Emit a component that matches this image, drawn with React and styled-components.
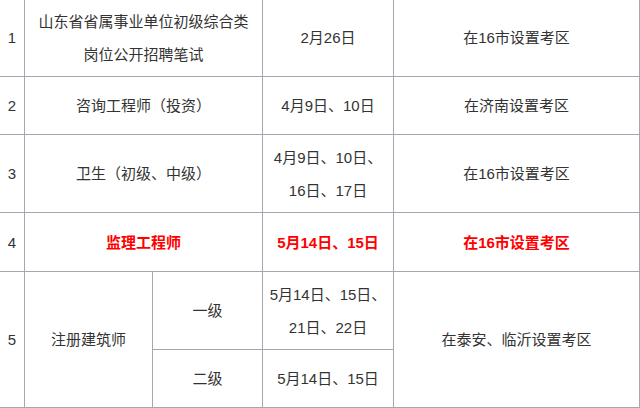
import styled, { createGlobalStyle } from 'styled-components';

const GlobalStyle = createGlobalStyle`
    html, body {
        margin: 0;
        padding: 0;
        background: #fff;
        overflow: hidden;
    }
    body {
        font-family: "Liberation Sans", "Noto Sans CJK SC", sans-serif;
        font-size: 15px;
        color: #333;
    }
`;

const COLUMNS = [25, 128, 110, 131, 246];

const App = () => (
    <Page>
        <GlobalStyle />
        <Table>
            <colgroup>
                {COLUMNS.map((w, i) => <col key={i} style={{ width: w }} />)}
            </colgroup>
            <tbody>
                <Row $tall>
                    <Cell>1</Cell>
                    <Cell colSpan={2} $inset={9}>山东省省属事业单位初级综合类岗位公开招聘笔试</Cell>
                    <Cell>2月26日</Cell>
                    <Cell>在16市设置考区</Cell>
                </Row>
                <Row>
                    <Cell>2</Cell>
                    <Cell colSpan={2}>咨询工程师（投资）</Cell>
                    <Cell>4月9日、10日</Cell>
                    <Cell>在济南设置考区</Cell>
                </Row>
                <Row $tall>
                    <Cell>3</Cell>
                    <Cell colSpan={2}>卫生（初级、中级）</Cell>
                    <Cell>4月9日、10日、16日、17日</Cell>
                    <Cell>在16市设置考区</Cell>
                </Row>
                <Row $h={59}>
                    <Cell>4</Cell>
                    <Cell colSpan={2} $alert>监理工程师</Cell>
                    <Cell $alert>5月14日、15日</Cell>
                    <Cell $alert>在16市设置考区</Cell>
                </Row>
                <Row $tall>
                    <Cell rowSpan={2}>5</Cell>
                    <Cell rowSpan={2}>注册建筑师</Cell>
                    <Cell>一级</Cell>
                    <Cell>5月14日、15日、21日、22日</Cell>
                    <Cell rowSpan={2}>在泰安、临沂设置考区</Cell>
                </Row>
                <Row>
                    <Cell>二级</Cell>
                    <Cell>5月14日、15日</Cell>
                </Row>
            </tbody>
        </Table>
    </Page>
);

export default App;

const Page = styled.div`
    width: 640px;
    height: 408px;
    overflow: hidden;
`;

const Table = styled.table`
    table-layout: fixed;
    border-collapse: collapse;
    width: 641px;
    margin: -2px 0 0 -1px;
`;

const Row = styled.tr`
    height: ${({ $tall, $h }) => $h || ($tall ? 78 : 58)}px;
`;

const Cell = styled.td`
    border: 1px solid #a6a6b0;
    padding: 5px ${({ $inset }) => $inset || 5}px;
    text-align: center;
    vertical-align: middle;
    line-height: 33px;
    color: ${({ $alert }) => ($alert ? '#ff0000' : '#333')};
    font-weight: ${({ $alert }) => ($alert ? 700 : 400)};
`;
